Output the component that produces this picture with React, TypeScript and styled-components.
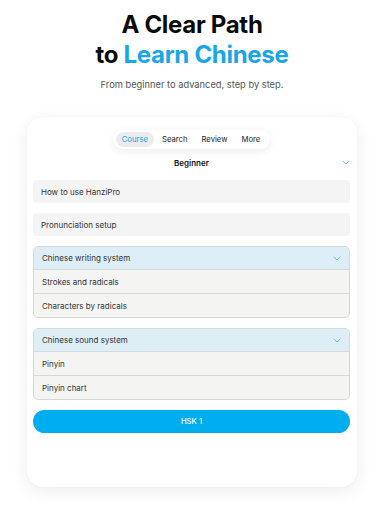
import React from "react";
import styled, { createGlobalStyle } from "styled-components";

const Global = createGlobalStyle`
  html, body { margin: 0; padding: 0; background: #ffffff; }
  body { font-family: Inter, "Noto Sans", sans-serif; color: #111; }
`;

const Page = styled.div`
  width: 384px;
  height: 512px;
  display: flex;
  flex-direction: column;
  align-items: center;
  overflow: hidden;
`;

const Title = styled.h1`
  margin: 10px 0 0;
  font-size: 24px;
  line-height: 30px;
  font-weight: 700;
  text-align: center;
  letter-spacing: -0.3px;
  color: #0a0a0a;
`;

const Accent = styled.span`
  color: #17a7e6;
`;

const Subtitle = styled.p`
  margin: 8px 0 0;
  font-size: 9.3px;
  line-height: 13px;
  color: #555;
`;

const Card = styled.div`
  margin-top: 26px;
  width: 330px;
  height: 370px;
  box-sizing: border-box;
  background: #fff;
  border-radius: 16px;
  box-shadow: 0 4px 18px rgba(0, 0, 0, 0.08), 0 0 2px rgba(0, 0, 0, 0.04);
  padding: 13px 7px 0 6px;
  display: flex;
  flex-direction: column;
`;

const TabBar = styled.div`
  align-self: center;
  display: flex;
  align-items: center;
  height: 19px;
  box-sizing: border-box;
  padding: 0 3px;
  background: #fff;
  border-radius: 10px;
  box-shadow: 0 2px 8px rgba(0, 0, 0, 0.08);
`;

const Tab = styled.div<{ $active?: boolean }>`
  height: 15px;
  padding: 0 ${(p) => (p.$active ? "6px" : "7px")};
  margin-right: ${(p) => (p.$active ? "1px" : "0")};
  display: flex;
  align-items: center;
  border-radius: 8px;
  font-size: 7.7px;
  color: ${(p) => (p.$active ? "#1aa3e3" : "#222")};
  background: ${(p) => (p.$active ? "#ececec" : "transparent")};
`;

const LevelRow = styled.div`
  position: relative;
  height: 20px;
  margin-top: 4px;
  margin-bottom: 7px;
  display: flex;
  align-items: center;
  justify-content: center;
  font-size: 8px;
  font-weight: 600;
  color: #111;
`;

const Chevron = styled.svg`
  position: absolute;
  right: 0;
  top: 7px;
`;

const List = styled.div`
  display: flex;
  flex-direction: column;
  gap: 10px;
`;

const Row = styled.div`
  height: 23px;
  display: flex;
  align-items: center;
  padding: 0 8px;
  border-radius: 4px;
  background: #f4f4f4;
  font-size: 8px;
  color: #333;
`;

const Group = styled.div`
  border: 1px solid #d6d8d9;
  border-radius: 5px;
  overflow: hidden;
  background: #f4f4f3;
`;

const GroupHeader = styled.div`
  height: 22px;
  display: flex;
  align-items: center;
  justify-content: space-between;
  padding: 0 8px;
  background: #ddeef6;
  font-size: 8px;
  color: #333;
`;

const GroupItem = styled.div`
  height: 23px;
  display: flex;
  align-items: center;
  padding: 0 8px;
  border-top: 1px solid #d6d8d9;
  font-size: 8px;
  color: #333;
`;

const Button = styled.div`
  height: 23px;
  border-radius: 12px;
  background: #00adef;
  color: #fff;
  display: flex;
  align-items: center;
  justify-content: center;
  font-size: 7.7px;
  font-weight: 500;
`;

const Down = ({ abs }: { abs?: boolean }) => {
  const svg = (
    <path d="M1 1.2 L4 4 L7 1.2" fill="none" stroke="#5bbfec" strokeWidth="1" strokeLinecap="round" strokeLinejoin="round" />
  );
  return abs ? (
    <Chevron width="8" height="5" viewBox="0 0 8 5">{svg}</Chevron>
  ) : (
    <svg width="8" height="5" viewBox="0 0 8 5">{svg}</svg>
  );
};

export default function App() {
  return (
    <>
      <Global />
      <Page>
        <Title>
          A Clear Path
          <br />
          to <Accent>Learn Chinese</Accent>
        </Title>
        <Subtitle>From beginner to advanced, step by step.</Subtitle>
        <Card>
          <TabBar>
            <Tab $active>Course</Tab>
            <Tab>Search</Tab>
            <Tab>Review</Tab>
            <Tab>More</Tab>
          </TabBar>
          <LevelRow>
            Beginner
            <Down abs />
          </LevelRow>
          <List>
            <Row>How to use HanziPro</Row>
            <Row>Pronunciation setup</Row>
            <Group>
              <GroupHeader>
                Chinese writing system
                <Down />
              </GroupHeader>
              <GroupItem>Strokes and radicals</GroupItem>
              <GroupItem>Characters by radicals</GroupItem>
            </Group>
            <Group>
              <GroupHeader>
                Chinese sound system
                <Down />
              </GroupHeader>
              <GroupItem>Pinyin</GroupItem>
              <GroupItem>Pinyin chart</GroupItem>
            </Group>
            <Button>HSK 1</Button>
          </List>
        </Card>
      </Page>
    </>
  );
}
